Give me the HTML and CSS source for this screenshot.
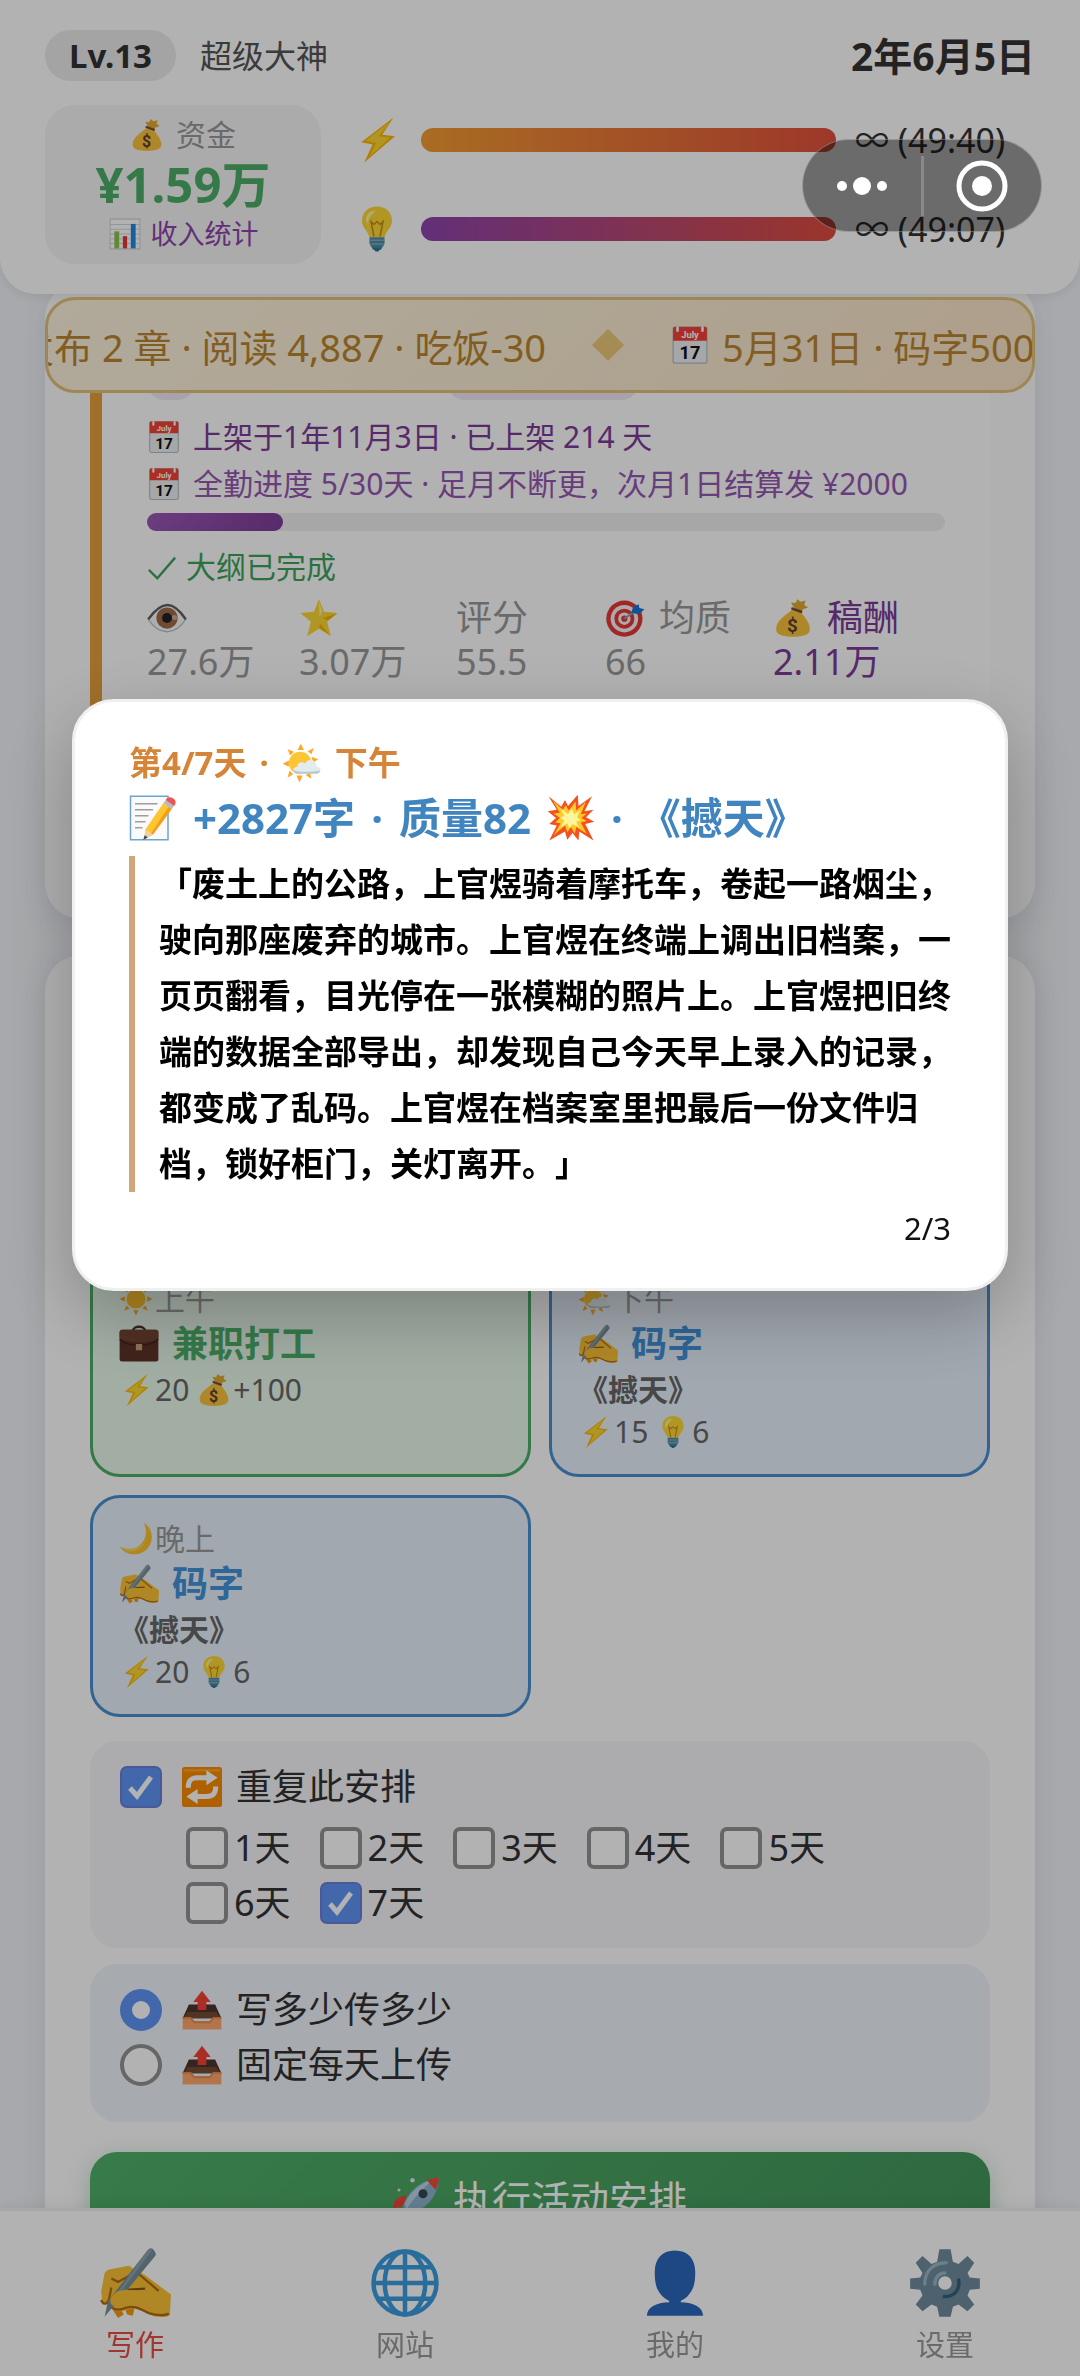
FILE: index.html
```
<!DOCTYPE html>
<html lang="zh-CN">
<head>
    <meta charset="UTF-8">
    <meta name="viewport" content="width=device-width, initial-scale=1.0">
    <title>写作</title>
    <link rel="stylesheet" href="styles.css">
</head>
<body>
    <!-- icon sprite -->
    <svg class="sprite" aria-hidden="true">
        <symbol id="i-bag" viewBox="0 0 64 64">
            <path fill="#e0a92e" d="M33 15 29 7l7 1 3-6 5 4 8-2-2 7 6 4-8 3-3 5z"/>
            <path fill="#f9c23c" d="M29 20c4-3 13-2 16 2 4 8 14 16 14 28 0 9-10 12-27 12S5 59 5 50c0-14 15-22 24-30z"/>
            <path stroke="#6d4c41" stroke-width="4" stroke-linecap="round" d="m31 17 14 5"/>
            <text x="31" y="54" text-anchor="middle" class="svg-dollar">$</text>
        </symbol>
        <symbol id="i-chart" viewBox="0 0 64 64">
            <path fill="#fff" stroke="#cfd2d4" stroke-width="2" d="M4 4h56v56H4z"/>
            <path stroke="#cfd8dc" stroke-width="2" d="M4 14h56M4 23h56M4 32h56M4 41h56M4 50h56"/>
            <path fill="#8bc34a" d="M12 27h9v32h-9z"/>
            <path fill="#e53935" d="M28 36h8v23h-8z"/>
            <path fill="#1e88e5" d="M43 13h9v46h-9z"/>
        </symbol>
        <symbol id="i-bolt" viewBox="0 0 64 64">
            <path fill="#feb804" d="M54 2 11 35l15 3-11 24 41-35-17-2z"/>
            <path fill="#fdd835" d="M50 7 17 33l14 3-9 18 27-25-15-2z"/>
        </symbol>
        <symbol id="i-bulb" viewBox="0 0 64 64">
            <path fill="#fdd835" d="M32 2c-12 0-20 8-20 19 0 10 8 13 10 22h20c2-9 10-12 10-22C52 10 44 2 32 2z"/>
            <path fill="#fff59d" d="M22 10c-5 4-6 11-3 15 2-7 5-12 11-17-3-1-6 0-8 2z"/>
            <path fill="none" stroke="#c88a10" stroke-width="2" d="M28 42 24 22l4 4 4-4 4 4 4-4-4 20"/>
            <path fill="#4c8ba5" d="M22 43h20v9l-5 8H27l-5-8z"/>
            <path stroke="#82aec0" stroke-width="2" d="M22 47h20M23 52h18"/>
            <path fill="#2f7889" d="M27 57h10l-3 5h-4z"/>
        </symbol>
        <symbol id="i-cal" viewBox="0 0 64 64">
            <rect x="5" y="3" width="54" height="58" rx="3" fill="#eceff1" stroke="#b0bec5" stroke-width="2"/>
            <path fill="#f44336" d="M5 25V6q0-3 3-3h48q3 0 3 3v19z"/>
            <path stroke="#fff" stroke-width="4" stroke-linecap="round" d="M12 4v5M52 4v5"/>
            <text x="32" y="20" text-anchor="middle" class="svg-month">July</text>
            <text x="32" y="54" text-anchor="middle" class="svg-day">17</text>
        </symbol>
        <symbol id="i-check" viewBox="0 0 64 64">
            <path fill="none" stroke="currentColor" stroke-width="5" d="m4 38 18 18L60 12"/>
        </symbol>
        <symbol id="i-eye" viewBox="0 0 64 64">
            <path fill="#fafafa" stroke="#a8bdc9" stroke-width="2" d="M2 34C14 17 24 11 33 11s19 8 29 23C53 48 44 54 32 54S11 48 2 34z"/>
            <circle cx="32" cy="32" r="17" fill="#a06a4c"/>
            <circle cx="32" cy="32" r="8" fill="#212121"/>
            <circle cx="44" cy="31" r="4" fill="#d3aa96"/>
            <path fill="none" stroke="#606060" stroke-width="4" d="M2 34C14 17 24 11 33 11s19 8 29 23"/>
        </symbol>
        <symbol id="i-star" viewBox="0 0 64 64">
            <path fill="#fdd835" d="m32 2 8 20 22 2-17 14 6 23-19-12-19 12 6-23L2 24l22-2z"/>
            <path fill="#fff59d" d="m32 6 5 16-4 8z"/>
            <path fill="#f4b400" d="M60 25 46 36l-8-4zM49 59 32 47l2-6z"/>
        </symbol>
        <symbol id="i-target" viewBox="0 0 64 64">
            <circle cx="31" cy="33" r="29" fill="#e53935"/>
            <circle cx="31" cy="33" r="22" fill="#f5f5f5"/>
            <circle cx="31" cy="33" r="16" fill="#e53935"/>
            <circle cx="31" cy="33" r="10" fill="#f5f5f5"/>
            <circle cx="31" cy="33" r="5" fill="#e53935"/>
            <path stroke="#90a4ae" stroke-width="3" d="m31 33 20-14"/>
            <path fill="#1976d2" d="m42 24 3-10 9-4 1 6 8 2-8 8z"/>
        </symbol>
        <symbol id="i-sun" viewBox="0 0 64 64">
            <path fill="#ffa726" d="m32 1 5 10H27zM32 63l5-10H27zM1 32l10-5v10zM63 32l-10-5v10zM10 10l10 4-6 6zM54 10l-10 4 6 6zM10 54l10-4-6-6zM54 54l-10-4 6-6z"/>
            <circle cx="32" cy="32" r="18" fill="#fbc02d"/>
        </symbol>
        <symbol id="i-suncloud" viewBox="0 0 64 64">
            <path fill="#ffa726" d="m30 1 5 10H25zM28 63l5-11H23zM1 33l10-5v10zM58 26l-11-4 3 9zM9 10l10 4-6 6zM51 8l-10 5 6 5zM9 55l9-5-6-6zM47 57l-9-6 7-4z"/>
            <circle cx="29" cy="32" r="18" fill="#fcc534"/>
            <path fill="#e3ebee" d="M23 49c-6-1-7-10 1-11 1-7 9-9 13-5 4-9 18-7 18 4 9 1 9 12 0 12z"/>
            <path fill="#b7c9d0" d="M23 49c-4-1-5-4-4-6 8 5 28 3 42 1 0 3-3 5-6 5z"/>
        </symbol>
        <symbol id="i-memo" viewBox="0 0 64 64">
            <path fill="#fafafa" stroke="#6ba6d0" stroke-width="2" d="M2 3h50v58H2z"/>
            <path stroke="#9e9e9e" stroke-width="2" d="M8 13h30M8 21h24M8 29h18M8 37h14M8 45h10"/>
            <path fill="#fdc52f" d="m46 12 11 8-25 34-9 5-2-1 1-11z"/>
            <path fill="#f39f1b" d="m53 17 4 3-25 34-5 2z"/>
            <path fill="#f3cfa0" d="m22 47 10 7-12 6z"/>
            <path fill="#424242" d="m21 55 4 3-6 3z"/>
            <path fill="#b0bec5" d="m46 12 3-4 11 8-3 4z"/>
            <path fill="#ef5350" d="M49 8c2-4 6-5 10-2s4 6 1 10z"/>
        </symbol>
        <symbol id="i-boom" viewBox="0 0 64 64">
            <path fill="#f4511e" d="m2 3 17 14 5-9 4 8L41 1l1 15L60 3 50 23l12-2-10 10 11 6-12 3 11 22-19-12-1 12-8-10-7 9-3-11L3 62l10-20-10-2 9-8-11-9 12-2z"/>
            <path fill="#ffc928" d="m8 9 13 12 4-6 4 7 9-12 1 12 13-12-7 17 8-1-7 6 7 4-8 2 8 15-14-9-2 9-5-9-5 7-3-9L9 55l9-16-7-1 6-6-8-6 8-1z"/>
            <path fill="#fff59d" d="m18 19 10 8 5-8 3 8 8-5-4 9 5 4-6 2 4 8-9-5-4 6-3-7-9 6 5-10-6-3 6-3z"/>
        </symbol>
        <symbol id="i-case" viewBox="0 0 64 64">
            <path fill="none" stroke="#4e342e" stroke-width="4" d="M22 12c0-10 20-10 20 0"/>
            <rect x="1" y="9" width="62" height="51" rx="4" fill="#5d3427"/>
            <path fill="#754434" d="M1 13q0-4 4-4h54q4 0 4 4v9c-9 10-53 10-62 0z"/>
            <path fill="none" stroke="#3e2018" stroke-width="2" d="M1 24c9 13 53 13 62 0"/>
            <path fill="#c9a27a" d="M27 32h10v10H27z"/>
        </symbol>
        <symbol id="i-write" viewBox="0 0 64 64">
            <path fill="#ef9c13" d="M11 54h8l3 6-5 3zM22 52h10l-2 9-5-1z"/>
            <path fill="#fbc236" d="M3 51 2 39l3-16q1-2 4-3l15-3q4-1 6 2l11 6 20 15 3 2-1 18c0 3-13 3-18 0-7-4-13-7-21-4-7 3-12 0-14-5z"/>
            <path fill="none" stroke="#b56a12" stroke-width="2" d="M2 47c2 6 6 3 7-1l2-10M11 28l6 3 16-9 20 17M9 49c1 7 8 8 15 5 9-3 15 3 21 5 6 2 15 2 17 0"/>
            <path fill="none" stroke="#8d5513" stroke-width="2" d="m24 38 17-1"/>
            <path fill="#78909c" d="M43 3q3-4 6 0t0 6L21 43 9 57l-4 5 3-14z"/>
            <path fill="#90a4ae" d="M43 3q2-2 4 0L20 39l-4 2z"/>
            <path fill="#fbc236" d="M17 39c-7 4-9 9-5 13 7 0 13-6 22-2l6-11-16-1z"/>
        </symbol>
        <symbol id="i-moon" viewBox="0 0 64 64">
            <path fill="#fbc02d" d="M47 2c16 9 19 30 9 45-13 18-42 19-54 0 16 6 31 5 40-6 10-11 11-25 5-39z"/>
            <path fill="#fdd85d" d="M48 4c9 16 3 34-9 42-11 7-25 7-35 2 15 14 40 6 46-13 3-10 3-22-2-31z"/>
        </symbol>
        <symbol id="i-repeat" viewBox="0 0 64 64">
            <rect width="64" height="64" rx="4" fill="#fb8c00"/>
            <path fill="#ffa726" d="M3 3h58v4H3z"/>
            <path fill="none" stroke="#fff" stroke-width="8" d="M10 33c0-12 5-16 15-16h16M54 31c0 12-5 16-15 16H24"/>
            <path fill="#fff" d="m39 5 18 12-18 12zM25 35 7 47l18 12z"/>
        </symbol>
        <symbol id="i-outbox" viewBox="0 0 64 64">
            <path fill="#4e342e" d="M11 23h42l10 22H1z"/>
            <path fill="#754c34" d="M9 35h46l6 10H3z"/>
            <path fill="#ffa76b" d="M1 43h13l6 7h24l6-7h13v20H1z"/>
            <path fill="#e68b51" d="M1 43h13l6 7h24l6-7h13v3H51l-6 7H19l-6-7H1z"/>
            <path fill="#f44336" d="m32 1 14 18h-7v13H25V19h-7z"/>
        </symbol>
        <symbol id="i-rocket" viewBox="0 0 64 64">
            <path fill="#f44336" d="M18 26 4 32-1 45l16-4zM38 44 34 60l-10 3 2-14z"/>
            <path fill="#fbc02d" d="m15 42-9 19 17-11z"/>
            <path fill="#8db4cf" d="M13 42C20 23 34 8 61 3c-1 25-14 40-37 49z"/>
            <path fill="#bcd6e6" d="M16 38C24 20 39 10 55 5 38 20 28 30 18 46z"/>
            <path fill="#ef4b34" d="M45 7c5-2 10-3 16-4 0 6-2 11-4 17z"/>
            <circle cx="40" cy="25" r="6" fill="#37474f"/>
            <circle cx="26" cy="7" r="3" fill="#dfe8ec"/>
            <circle cx="8" cy="20" r="2" fill="#dfe8ec"/>
        </symbol>
        <symbol id="i-globe" viewBox="0 0 64 64">
            <g fill="none" stroke="#3a9de0" stroke-width="4">
                <circle cx="32" cy="32" r="28"/>
                <ellipse cx="32" cy="32" rx="18" ry="28"/>
                <path d="M32 4v56M4 32h56M8 18h48M8 46h48"/>
            </g>
        </symbol>
        <symbol id="i-user" viewBox="0 0 64 64">
            <path fill="#2c68bd" d="M32 3C20 3 14 11 14 22c0 14 3 17 7 22 3 3 6 3 6 5-12 0-20 5-20 12h50c0-7-8-12-20-12 0-2 3-2 6-5 4-5 7-8 7-22C50 11 44 3 32 3z"/>
        </symbol>
        <symbol id="i-gear" viewBox="0 0 64 64">
            <path fill="#6f8d9e" fill-rule="evenodd" d="M27 2h10l2 11 5 2 8-7 6 6-6 9 2 4 9 1v9l-9 1-2 5 6 8-6 6-8-6-5 2-2 9H27l-2-9-5-2-8 6-6-6 6-8-2-5-9-1v-9l9-1 2-4-6-9 6-6 8 7 5-2zM32 26a6 6 0 1 0 0 12 6 6 0 0 0 0-12z"/>
            <path fill="none" stroke="#9ab8c7" stroke-width="3" stroke-linecap="round" d="M14 33c0-12 8-19 19-19M23 33c0-6 4-10 9-10"/>
            <path fill="none" stroke="#37617a" stroke-width="3" d="M44 28c2 10-4 17-14 16"/>
        </symbol>
    </svg>

    <div class="topbar">
        <header class="header">
            <div class="header-row">
                <span class="level">Lv.13</span>
                <span class="rank">超级大神</span>
                <span class="date">2年6月5日</span>
            </div>
            <div class="header-row">
                <div class="money">
                    <div class="money-label"><svg class="ic"><use href="#i-bag"/></svg>资金</div>
                    <div class="money-value">¥1.59万</div>
                    <a class="money-link" href="#"><svg class="ic"><use href="#i-chart"/></svg>收入统计</a>
                </div>
                <div class="status">
                    <div class="status-row">
                        <svg class="ic ic-l"><use href="#i-bolt"/></svg>
                        <div class="status-bar energy"></div>
                        <span class="status-time">∞ (49:40)</span>
                    </div>
                    <div class="status-row">
                        <svg class="ic ic-l"><use href="#i-bulb"/></svg>
                        <div class="status-bar idea"></div>
                        <span class="status-time">∞ (49:07)</span>
                    </div>
                </div>
            </div>
        </header>

        <div class="ticker">
            <div class="ticker-track">
                <span>发布 2 章 · 阅读 4,887 · 吃饭-30</span>
                <svg class="diamond" viewBox="0 0 32 32"><path fill="#ebc979" d="m16 0 16 16-16 16L0 16z"/></svg>
                <span class="ticker-item"><svg class="ic ic-m"><use href="#i-cal"/></svg>5月31日 · 码字5005</span>
            </div>
        </div>
    </div>

    <main>
        <section class="panel panel-books">
            <article class="book">
                <div class="tags">
                    <span class="tag">都市</span>
                    <span class="tag tag-vip">签约作品</span>
                </div>
                <div class="book-line"><svg class="ic"><use href="#i-cal"/></svg>上架于1年11月3日 · 已上架 214 天</div>
                <div class="book-line light"><svg class="ic"><use href="#i-cal"/></svg>全勤进度 5/30天 · 足月不断更，次月1日结算发 ¥2000</div>
                <div class="progress"><div class="progress-fill" style="width: 17%"></div></div>
                <div class="book-line outline"><svg class="ic ic-s"><use href="#i-check"/></svg>大纲已完成</div>
                <div class="stats">
                    <div><div class="stat-name"><svg class="ic ic-m"><use href="#i-eye"/></svg></div>27.6万</div>
                    <div><div class="stat-name"><svg class="ic ic-m"><use href="#i-star"/></svg></div>3.07万</div>
                    <div><div class="stat-name">评分</div>55.5</div>
                    <div><div class="stat-name"><svg class="ic ic-m"><use href="#i-target"/></svg>均质</div>66</div>
                    <div class="pay"><div class="stat-name"><svg class="ic ic-m"><use href="#i-bag"/></svg>稿酬</div>2.11万</div>
                </div>
            </article>
        </section>

        <section class="panel panel-plan">
            <div class="slots">
                <div class="slot slot-work">
                    <div class="slot-time"><svg class="ic"><use href="#i-sun"/></svg>上午</div>
                    <div class="slot-title"><svg class="ic ic-m"><use href="#i-case"/></svg>兼职打工</div>
                    <div class="slot-cost"><svg class="ic"><use href="#i-bolt"/></svg>20 <svg class="ic next"><use href="#i-bag"/></svg>+100</div>
                </div>
                <div class="slot">
                    <div class="slot-time"><svg class="ic"><use href="#i-suncloud"/></svg>下午</div>
                    <div class="slot-title"><svg class="ic ic-m"><use href="#i-write"/></svg>码字</div>
                    <div class="slot-book">《撼天》</div>
                    <div class="slot-cost"><svg class="ic"><use href="#i-bolt"/></svg>15 <svg class="ic next"><use href="#i-bulb"/></svg>6</div>
                </div>
                <div class="slot">
                    <div class="slot-time"><svg class="ic"><use href="#i-moon"/></svg>晚上</div>
                    <div class="slot-title"><svg class="ic ic-m"><use href="#i-write"/></svg>码字</div>
                    <div class="slot-book">《撼天》</div>
                    <div class="slot-cost"><svg class="ic"><use href="#i-bolt"/></svg>20 <svg class="ic next"><use href="#i-bulb"/></svg>6</div>
                </div>
            </div>

            <div class="options">
                <label class="option"><input type="checkbox" checked><svg class="ic ic-m"><use href="#i-repeat"/></svg>重复此安排</label>
                <div class="days">
                    <label><input type="checkbox">1天</label>
                    <label><input type="checkbox">2天</label>
                    <label><input type="checkbox">3天</label>
                    <label><input type="checkbox">4天</label>
                    <label><input type="checkbox">5天</label>
                    <label><input type="checkbox">6天</label>
                    <label><input type="checkbox" checked>7天</label>
                </div>
            </div>

            <div class="options upload">
                <label class="option"><input type="radio" name="upload" checked><svg class="ic ic-m"><use href="#i-outbox"/></svg>写多少传多少</label>
                <label class="option"><input type="radio" name="upload"><svg class="ic ic-m"><use href="#i-outbox"/></svg>固定每天上传</label>
            </div>

            <button class="run"><svg class="ic ic-l"><use href="#i-rocket"/></svg>执行活动安排</button>
        </section>
    </main>

    <nav class="tabbar">
        <a class="tab active" href="#"><svg class="ic ic-tab"><use href="#i-write"/></svg>写作</a>
        <a class="tab" href="#"><svg class="ic ic-tab"><use href="#i-globe"/></svg>网站</a>
        <a class="tab" href="#"><svg class="ic ic-tab"><use href="#i-user"/></svg>我的</a>
        <a class="tab" href="#"><svg class="ic ic-tab"><use href="#i-gear"/></svg>设置</a>
    </nav>

    <!-- result popup -->
    <div class="overlay">
        <div class="modal" role="dialog">
            <div class="modal-day">
                <span>第4/7天</span>
                <span>·</span>
                <svg class="ic ic-m"><use href="#i-suncloud"/></svg>
                <span>下午</span>
            </div>
            <div class="modal-title">
                <svg class="ic ic-l"><use href="#i-memo"/></svg>
                <span>+2827字</span>
                <span>·</span>
                <span>质量82</span>
                <svg class="ic ic-l"><use href="#i-boom"/></svg>
                <span>·</span>
                <span>《撼天》</span>
            </div>
            <blockquote class="quote">「废土上的公路，上官煜骑着摩托车，卷起一路烟尘，驶向那座废弃的城市。上官煜在终端上调出旧档案，一页页翻看，目光停在一张模糊的照片上。上官煜把旧终端的数据全部导出，却发现自己今天早上录入的记录，都变成了乱码。上官煜在档案室里把最后一份文件归档，锁好柜门，关灯离开。」</blockquote>
            <div class="modal-page">2/3</div>
        </div>
    </div>

    <div class="capsule">
        <button aria-label="更多">
            <svg width="52" height="20" viewBox="0 0 52 20" fill="#fff"><circle cx="6" cy="10" r="5"/><circle cx="26" cy="10" r="9"/><circle cx="46" cy="10" r="5"/></svg>
        </button>
        <button aria-label="关闭">
            <svg width="52" height="52" viewBox="0 0 52 52"><circle cx="26" cy="26" r="23" fill="none" stroke="#fff" stroke-width="5"/><circle cx="26" cy="26" r="10" fill="#fff"/></svg>
        </button>
    </div>
</body>
</html>
```

FILE: styles.css
```
* {
    box-sizing: border-box;
}

body {
    margin: 0;
    background: #f0f3f7;
    color: #333;
    font-family: "Noto Sans", "Noto Sans CJK SC", sans-serif;
    font-size: 36px;
    text-spacing-trim: space-all;
}

a {
    color: inherit;
    text-decoration: none;
}

button {
    font-family: inherit;
    border: none;
}

/* icons */
.sprite {
    display: none;
}

.ic {
    width: 34px;
    height: 34px;
    flex: none;
}

.ic-s {
    width: 30px;
    height: 30px;
}

.ic-m {
    width: 40px;
    height: 40px;
}

.ic-l {
    width: 48px;
    height: 48px;
}

.ic-tab {
    width: 72px;
    height: 72px;
}

.svg-dollar {
    font: bold 30px Roboto, sans-serif;
    fill: #5d4037;
}

.svg-month {
    font: bold 15px Roboto, sans-serif;
    fill: #fff;
}

.svg-day {
    font: bold 29px Roboto, sans-serif;
    fill: #111;
}

/* header */
.topbar {
    position: sticky;
    top: 0;
    z-index: 2;
}

.header {
    display: flex;
    flex-direction: column;
    gap: 24px;
    padding: 30px 45px;
    background: #fff;
    border-radius: 0 0 36px 36px;
    box-shadow: 0 3px 12px rgba(0, 0, 0, 0.08);
}

.header-row {
    display: flex;
    align-items: center;
}

.level {
    padding: 0 24px;
    line-height: 51px;
    border-radius: 26px;
    background: #ebebeb;
    font-size: 33px;
    font-weight: bold;
}

.rank {
    margin-left: 24px;
    font-size: 32px;
    line-height: 51px;
    color: #555;
}

.date {
    margin-left: auto;
    font-size: 39px;
    font-weight: bold;
    line-height: 51px;
}

.money {
    width: 276px;
    padding: 9px 0;
    border-radius: 30px;
    background: #f5f5f5;
    text-align: center;
}

.money-label,
.money-link {
    display: flex;
    align-items: center;
    justify-content: center;
    gap: 12px;
    line-height: 42px;
}

.money-label {
    font-size: 30px;
    color: #999;
}

.money-value {
    color: #4cae68;
    font-size: 49px;
    font-weight: bold;
    line-height: 57px;
}

.money-link {
    gap: 9px;
    font-size: 27px;
    color: #8e44ad;
}

.status {
    flex: 1;
    display: flex;
    flex-direction: column;
    gap: 41px;
    margin-left: 32px;
    padding-bottom: 1px;
}

.status-row {
    display: flex;
    align-items: center;
}

.status-bar {
    flex: 1;
    height: 24px;
    margin: 0 19px 0 20px;
    border-radius: 12px;
}

.energy {
    background: linear-gradient(90deg, #f39c32, #e0503c);
}

.idea {
    background: linear-gradient(90deg, #8e44ad, #df4c3e);
}

.status-time {
    width: 180px;
    font-size: 34px;
    line-height: 48px;
    white-space: nowrap;
}

/* news ticker */
.ticker {
    margin: 3px 45px 0;
    height: 96px;
    border: 3px solid #e2c27a;
    border-radius: 30px;
    background: linear-gradient(135deg, #fdf4de, #f9e4c8);
    overflow: hidden;
}

.ticker-track {
    display: flex;
    align-items: center;
    gap: 46px;
    height: 90px;
    margin-left: -32px;
    white-space: nowrap;
    font-size: 38px;
    color: #bb8630;
}

.ticker-item {
    display: flex;
    align-items: center;
    gap: 12px;
}

.diamond {
    flex: none;
    width: 32px;
    height: 32px;
}

/* panels */
.panel {
    margin: 0 45px 36px;
    padding: 45px;
    border-radius: 36px;
    background: #fff;
    box-shadow: 0 6px 30px rgba(60, 70, 90, 0.1);
}

/* slides under the ticker */
.panel-books {
    margin-top: -111px;
    background: #fcfcfc;
}

.book {
    padding: 24px 45px 190px;
    border-left: 12px solid #e5a03c;
    border-radius: 24px;
    background: #fff;
}

.tags {
    display: flex;
    gap: 252px;
    padding-top: 9px;
}

.tag {
    border-radius: 18px;
    background: #efe9f5;
    color: #8e6aa8;
    font-size: 24px;
    line-height: 40px;
}

.tag-vip {
    padding: 0 48px;
}

.book-line {
    display: flex;
    align-items: center;
    gap: 12px;
    line-height: 47px;
    font-size: 30px;
    color: #7d3c98;
    white-space: nowrap;
}

.tags + .book-line {
    margin-top: 13px;
}

.light {
    color: #9558b2;
}

.outline {
    margin-top: 12px;
    gap: 9px;
    color: #3ea35c;
}

.progress {
    height: 18px;
    margin-top: 6px;
    border-radius: 9px;
    background: #f0f0f0;
}

.progress-fill {
    height: 18px;
    border-radius: 9px;
    background: linear-gradient(135deg, #9b59b6, #7d3c98);
}

.stats {
    display: grid;
    grid-template-columns: 152fr 157fr 149fr 168fr 172fr;
    margin-top: 6px;
    line-height: 44px;
    color: #999;
}

.stat-name {
    display: flex;
    align-items: center;
    gap: 14px;
    height: 44px;
}

.pay {
    color: #7d3c98;
}

/* schedule */
.panel-plan {
    padding-top: 300px;
    margin-bottom: 0;
}

.slots {
    display: grid;
    grid-template-columns: 1fr 1fr;
    gap: 18px;
    font-size: 30px;
    color: #666;
}

.slot {
    min-height: 222px;
    padding: 21px 26px;
    border: 3px solid #4a90d0;
    border-radius: 30px;
    background: #e7f1fb;
}

.slot-work {
    border-color: #4cae68;
    background: #e8f8eb;
}

.slot-time,
.slot-title,
.slot-cost {
    display: flex;
    align-items: center;
    gap: 2px;
}

.slot-time {
    line-height: 40px;
    color: #999;
}

.slot-title {
    gap: 13px;
    line-height: 50px;
    font-size: 36px;
    font-weight: bold;
    color: #4292da;
}

.slot-work .slot-title {
    color: #4cae68;
}

.slot-book {
    line-height: 42px;
    font-weight: bold;
}

.slot-cost {
    line-height: 42px;
}

.next {
    margin-left: 6px;
}

/* options */
.options {
    margin-top: 24px;
    padding: 18px 30px;
    border-radius: 27px;
    background: #f6f7fa;
}

.upload {
    margin-top: 16px;
    padding-bottom: 30px;
    background: #f0f5fc;
}

.option {
    display: flex;
    align-items: center;
    gap: 14px;
    line-height: 55px;
}

.option .ic {
    margin-left: 6px;
}

.days {
    display: flex;
    flex-wrap: wrap;
    column-gap: 29px;
    margin-top: 6px;
    padding: 0 30px 0 66px;
}

.days label {
    display: flex;
    align-items: center;
    gap: 6px;
    line-height: 55px;
}

input {
    appearance: none;
    flex: none;
    width: 42px;
    height: 42px;
    margin: 0;
    border: 4px solid #929292;
    border-radius: 7px;
    background: #fff;
}

input[type="radio"] {
    border-radius: 50%;
}

input[type="checkbox"]:checked {
    border: 2px solid #6a7fd8;
    background: #5f96f5 url('data:image/svg+xml,<svg xmlns="http://www.w3.org/2000/svg" viewBox="0 0 38 38"><path fill="none" stroke="white" stroke-width="5" d="m8 20 7 8L29 9"/></svg>');
}

input[type="radio"]:checked {
    border: 12px solid #5f96f5;
}

.run {
    display: flex;
    align-items: center;
    justify-content: center;
    gap: 12px;
    width: 100%;
    margin-top: 30px;
    padding: 18px;
    border-radius: 27px;
    background: linear-gradient(135deg, #50b169, #43955a);
    box-shadow: 0 6px 24px rgba(60, 150, 90, 0.3);
    color: #fff;
    font-size: 39px;
    line-height: 57px;
}

/* bottom tabs */
.tabbar {
    position: fixed;
    bottom: 0;
    left: 0;
    right: 0;
    z-index: 2;
    display: flex;
    padding: 36px 0 9px;
    border-top: 3px solid #f0f0f0;
    background: #fff;
    box-shadow: 0 -3px 12px rgba(0, 0, 0, 0.06);
}

.tab {
    flex: 1;
    display: flex;
    flex-direction: column;
    align-items: center;
    gap: 3px;
    font-size: 29px;
    line-height: 45px;
    color: #999;
}

.active {
    color: #e74c45;
}

/* popup */
.overlay {
    position: fixed;
    inset: 0;
    z-index: 3;
    padding: 699px 72px 0;
    background: rgba(0, 0, 0, 0.3);
}

.modal {
    padding: 36px 54px;
    border: 3px solid #f0f0f0;
    border-radius: 42px;
    background: #fff;
    box-shadow: 0 24px 72px rgba(0, 0, 0, 0.25);
}

.modal-day,
.modal-title {
    display: flex;
    align-items: center;
    gap: 13px;
    font-weight: bold;
    white-space: nowrap;
}

.modal-day {
    line-height: 50px;
    font-size: 33px;
    color: #d68538;
}

.modal-title {
    gap: 16px;
    line-height: 60px;
    font-size: 42px;
    color: #4084c0;
}

.quote {
    margin: 8px 0 12px;
    padding-left: 24px;
    border-left: 6px solid #cfa77a;
    font-size: 33px;
    font-weight: bold;
    line-height: 56px;
    color: #000;
}

.modal-page {
    text-align: right;
    font-size: 31px;
    line-height: 48px;
    color: #111;
}

/* mini program buttons */
.capsule {
    position: fixed;
    top: 139px;
    right: 38px;
    z-index: 4;
    display: flex;
    align-items: center;
    width: 240px;
    height: 93px;
    border: 1px solid rgba(255, 255, 255, 0.3);
    border-radius: 47px;
    background: rgba(0, 0, 0, 0.4);
}

.capsule button {
    flex: 1;
    display: flex;
    align-items: center;
    justify-content: center;
    height: 60px;
    background: none;
}

.capsule button + button {
    border-left: 3px solid rgba(255, 255, 255, 0.2);
}
```
